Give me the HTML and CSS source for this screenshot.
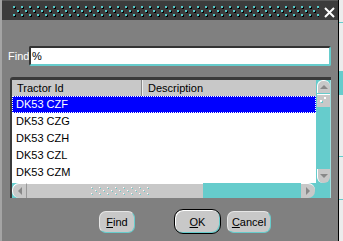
FILE: index.html
```html
<!DOCTYPE html>
<html>
<head>
<meta charset="utf-8">
<link rel="stylesheet" href="styles.css">
</head>
<body>
<div class="window">
  <div class="titlebar">
    <svg class="grip" width="306" height="11" viewBox="0 0 306 11">
      <defs>
        <pattern id="dots" width="8" height="8" patternUnits="userSpaceOnUse">
          <rect x="0" y="0" width="2" height="2" fill="#55cccc"/>
          <rect x="2" y="1" width="1" height="2" fill="#000"/>
          <rect x="1" y="2" width="1" height="1" fill="#000"/>
          <rect x="4" y="4" width="2" height="2" fill="#55cccc"/>
          <rect x="6" y="5" width="1" height="2" fill="#000"/>
          <rect x="5" y="6" width="1" height="1" fill="#000"/>
        </pattern>
      </defs>
      <rect width="306" height="11" fill="url(#dots)"/>
    </svg>
    <svg class="close" width="11" height="11" viewBox="0 0 11 11">
      <path d="M1 1L10 10M10 1L1 10" stroke="#fff" stroke-width="2"/>
    </svg>
  </div>
  <div class="content">
    <div class="findrow">
      <span class="label">Find</span>
      <div class="input">%</div>
    </div>
    <div class="listbox">
      <div class="main">
        <div class="header">
          <div class="col1">Tractor Id</div>
          <div class="col2">Description</div>
        </div>
        <div class="rows">
          <div class="row sel">DK53 CZF</div>
          <div class="row">DK53 CZG</div>
          <div class="row">DK53 CZH</div>
          <div class="row">DK53 CZL</div>
          <div class="row">DK53 CZM</div>
        </div>
        <div class="hscroll">
          <div class="sbtn left"><span class="tri-left"></span></div>
          <div class="hthumb">
            <svg width="60" height="8" viewBox="0 0 60 8">
              <defs>
                <pattern id="grip" width="8" height="6" patternUnits="userSpaceOnUse">
                  <rect x="0" y="0" width="1" height="1" fill="#fff"/>
                  <rect x="1" y="1" width="1" height="1" fill="#66cccc"/>
                  <rect x="4" y="3" width="1" height="1" fill="#fff"/>
                  <rect x="5" y="4" width="1" height="1" fill="#66cccc"/>
                </pattern>
              </defs>
              <rect width="60" height="8" fill="url(#grip)"/>
            </svg>
          </div>
          <div class="htrack"></div>
          <div class="sbtn right"><span class="tri-right"></span></div>
        </div>
      </div>
      <div class="vscroll">
        <div class="sbtn up"><span class="tri-up"></span></div>
        <div class="vthumb"><span class="tick"></span></div>
        <div class="vtrack"></div>
        <div class="sbtn down"><span class="tri-down"></span></div>
        <div class="corner"></div>
      </div>
    </div>
    <div class="buttons">
      <div class="btn find"><u>F</u>ind</div>
      <div class="btn ok"><u>O</u>K</div>
      <div class="btn cancel"><u>C</u>ancel</div>
    </div>
  </div>
</div>
<div class="backdrop">
  <div class="bline l1"></div>
  <div class="bblock"></div>
  <div class="bline l2"></div>
  <div class="bline l3"></div>
</div>
</body>
</html>
```

FILE: styles.css
```css
html, body {
  margin: 0;
  padding: 0;
}
body {
  width: 343px;
  height: 241px;
  overflow: hidden;
  display: flex;
  background: #ececec;
  font-family: "Liberation Sans", Arial, sans-serif;
  font-size: 11px;
  color: #000;
}
.window {
  width: 336px;
  height: 241px;
  border-left: 2px solid #a4a4a4;
  border-right: 1px solid #000;
  background: #808080;
  display: flex;
  flex-direction: column;
  flex: none;
}
.titlebar {
  height: 20px;
  background: #3c3c3c;
  border-top: 1px solid #5a5a5a;
  box-sizing: border-box;
  display: flex;
  align-items: flex-start;
  padding: 5px 0 0 11px;
}
.grip { display: block; flex: none; }
.close { display: block; flex: none; margin: 1px 0 0 5px; }
.content {
  display: flex;
  flex-direction: column;
}
.findrow {
  display: flex;
  align-items: center;
  height: 20px;
  margin-top: 26px;
  padding-left: 6px;
}
.label {
  color: #fff;
  width: 21px;
}
.input {
  width: 302px;
  height: 20px;
  box-sizing: border-box;
  background: #fff;
  border-top: 2px solid #333;
  border-left: 2px solid #333;
  border-right: 2px solid #66cccc;
  border-bottom: 2px solid #66cccc;
  border-radius: 2px;
  padding-left: 1px;
  line-height: 16px;
}
.listbox {
  display: flex;
  margin: 11px 0 0 8px;
  width: 321px;
  height: 121px;
  box-sizing: border-box;
  border-top: 3px solid #3a3a3a;
  border-left: 2px solid #3a3a3a;
  border-top-left-radius: 3px;
}
.main {
  width: 304px;
  display: flex;
  flex-direction: column;
}
.header {
  height: 16px;
  background: #c8c8c8;
  display: flex;
  line-height: 16px;
}
.col1 {
  width: 130px;
  padding-left: 5px;
  box-sizing: border-box;
  border-right: 1px solid #888;
}
.col2 {
  flex: 1;
  padding-left: 5px;
  border-left: 1px solid #eee;
}
.rows {
  height: 87px;
  background: #fff;
}
.row {
  height: 17px;
  line-height: 17px;
  padding-left: 4px;
  box-sizing: border-box;
}
.row.sel {
  background: #0000ff;
  color: #fff;
  border: 1px dotted #fff;
  padding-left: 3px;
  line-height: 15px;
}
.hscroll {
  height: 15px;
  background: #66cccc;
  display: flex;
  box-sizing: border-box;
  padding-right: 1px;
}
.sbtn {
  background: #c8c8c8;
  display: flex;
  align-items: center;
  justify-content: center;
  box-sizing: border-box;
}
.sbtn.left {
  width: 14px;
  border-radius: 7px 0 0 7px;
  border-left: 1px solid #fff;
  border-top: 1px solid #fff;
}
.sbtn.right {
  width: 14px;
  border-radius: 0 7px 7px 0;
  border-top: 1px solid #fff;
}
.hthumb {
  width: 177px;
  background: #c8c8c8;
  border-left: 1px solid #999;
  border-top: 1px solid #fff;
  box-sizing: border-box;
  display: flex;
  align-items: center;
  justify-content: center;
}
.hthumb svg { display: block; margin-left: 12px; }
.htrack { flex: 1; }
.vscroll {
  width: 15px;
  background: #66cccc;
  display: flex;
  flex-direction: column;
  box-sizing: border-box;
  padding-left: 1px;
  border-right: 1px solid #a0dede;
}
.sbtn.up {
  width: 13px;
  height: 13px;
  border-radius: 6px 6px 0 0;
  border-top: 1px solid #fff;
  border-left: 1px solid #fff;
}
.vthumb {
  width: 13px;
  height: 13px;
  margin-top: 1px;
  background: #c8c8c8;
  border-top: 1px solid #fff;
  box-sizing: border-box;
  position: relative;
}
.tick {
  position: absolute;
  left: 3px;
  top: 5px;
  width: 2px;
  height: 2px;
  background: #fff;
  box-shadow: 4px -3px 0 #fff, 1px 1px 0 #66cccc;
}
.vtrack { flex: 1; }
.sbtn.down {
  width: 13px;
  height: 14px;
  border-radius: 0 0 6px 6px;
  border-left: 1px solid #fff;
}
.corner { height: 15px; }
.tri-up {
  width: 0; height: 0;
  border-left: 4px solid transparent;
  border-right: 4px solid transparent;
  border-bottom: 4px solid #888;
}
.tri-down {
  width: 0; height: 0;
  border-left: 4px solid transparent;
  border-right: 4px solid transparent;
  border-top: 4px solid #888;
}
.tri-left {
  width: 0; height: 0;
  border-top: 4px solid transparent;
  border-bottom: 4px solid transparent;
  border-right: 4px solid #888;
}
.tri-right {
  width: 0; height: 0;
  border-top: 4px solid transparent;
  border-bottom: 4px solid transparent;
  border-left: 4px solid #888;
}
.buttons {
  display: flex;
  align-items: center;
  height: 25px;
  margin-top: 11px;
  padding-left: 97px;
}
.btn {
  background: #c8c8c8;
  height: 22px;
  box-sizing: border-box;
  border-radius: 7px;
  border: 1px solid #e6e6e6;
  border-right-color: #66cccc;
  border-bottom-color: #66cccc;
  display: flex;
  align-items: center;
  justify-content: center;
}
.btn u { text-decoration: underline; }
.btn.find { width: 36px; }
.btn.ok {
  width: 47px;
  height: 25px;
  margin-left: 39px;
  border: 1px solid #000;
  border-radius: 9px;
  box-shadow: inset 1px 1px 0 #fff, inset -1px -1px 0 #66cccc;
}
.btn.cancel { width: 44px; margin-left: 6px; }
.backdrop {
  flex: 1;
  display: flex;
  flex-direction: column;
  background: #ececec;
}
.bline { height: 1px; background: #66cccc; }
.l1 { margin-top: 22px; }
.bblock { height: 24px; margin-top: 48px; background: #66cccc; }
.l2 { margin-top: 61px; }
.l3 { margin-top: 42px; }
```
